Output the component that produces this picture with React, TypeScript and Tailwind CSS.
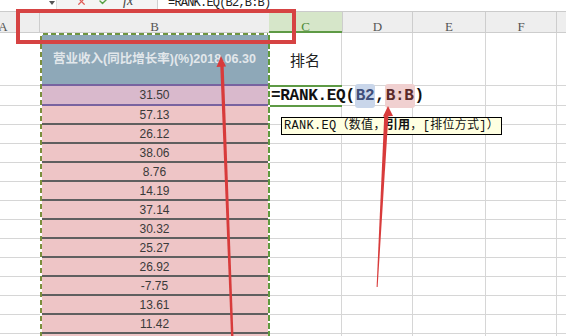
import { Check, X } from 'lucide-react';

const values = ['57.13', '26.12', '38.06', '8.76', '14.19', '37.14', '30.32', '25.27', '26.92', '-7.75', '13.61', '11.42', ''];

const grid = 'shrink-0 border-b border-r border-[#d6d6d6]';

function Rest({ children }: { children?: React.ReactNode }) {
  return (
    <>
      <div className={`w-[73px] ${grid} flex items-center justify-center`}>{children}</div>
      <div className={`w-[71px] ${grid}`} />
      <div className={`w-[73px] ${grid}`} />
      <div className={`w-[71px] ${grid}`} />
      <div className="w-[60px] shrink-0 border-b border-[#d6d6d6]" />
    </>
  );
}

export default function App() {
  return (
    <div className="relative w-[566px] h-[336px] overflow-hidden bg-white font-['Liberation_Sans','Noto_Sans_CJK_SC',sans-serif]">
      {/* formula bar, mostly scrolled off the top */}
      <div className="flex h-[12px] overflow-hidden border-b border-[#cbcbcb]">
        <div className="w-[57px] shrink-0 relative border-r border-[#dedede]">
          <svg className="absolute left-[49px] top-[1px]" width="6" height="4" viewBox="0 0 6 4">
            <polygon points="0,0 6,0 3,4" fill="#555" />
          </svg>
        </div>
        <div className="w-[100px] shrink-0 flex items-start bg-[#f4f4f4] pl-[19px]">
          <X size={11} strokeWidth={2.6} className="-mt-[4px] text-[#df5a55]" />
          <Check size={12} strokeWidth={2.8} className="-mt-[5px] ml-[11px] text-[#57a044]" />
          <span className="-mt-[6px] ml-[13px] font-['Liberation_Serif',serif] italic text-[14px] leading-[14px] text-[#444]">fx</span>
        </div>
        <div className="flex-1 border-l border-[#d0d0d0] pl-[10px]">
          <div className="-mt-[3px] font-['Liberation_Mono',monospace] text-[12px] leading-[12px] tracking-[-0.8px] text-[#222]">
            =RANK.EQ(B2,B:B)
          </div>
        </div>
      </div>

      <div className="-ml-[33px] flex flex-col">
        {/* column headers */}
        <div className="flex h-[21px] bg-[#eeeeee] font-['Liberation_Serif',serif] text-[13px] text-[#555]">
          <div className="w-[73px] shrink-0 border-b border-r border-[#cdcdcd] flex justify-center pt-[5px]">A</div>
          <div className="w-[229px] shrink-0 border-b border-[#cdcdcd] flex justify-center pt-[5px]">B</div>
          <div className="w-[73px] shrink-0 border-b-2 border-[#5e9a45] bg-[#d6e6c9] text-[#4f8b3a] flex justify-center pt-[5px]">C</div>
          <div className="w-[71px] shrink-0 border-b border-r border-l border-[#cdcdcd] flex justify-center pt-[5px]">D</div>
          <div className="w-[73px] shrink-0 border-b border-r border-[#cdcdcd] flex justify-center pt-[5px]">E</div>
          <div className="w-[71px] shrink-0 border-b border-r border-[#cdcdcd] flex justify-center pt-[5px]">F</div>
          <div className="w-[60px] shrink-0 border-b border-[#cdcdcd]" />
        </div>

        {/* row 1 */}
        <div className="flex h-[53px]">
          <div className="w-[73px] shrink-0 border-b border-[#d6d6d6]" />
          <div className="w-[229px] shrink-0 flex items-center justify-center bg-[#8ea8b8] border-b-2 border-[#7863a0] text-[12.5px] font-bold text-[#e2e7eb] pt-[2px]">
            营业收入(同比增长率)(%)2018.06.30
          </div>
          <Rest>
            <span className="font-['Noto_Sans_CJK_SC',sans-serif] text-[15px] text-[#222] mt-[2px]">排名</span>
          </Rest>
        </div>

        {/* row 2 */}
        <div className="flex h-[20px]">
          <div className="w-[73px] shrink-0 border-b border-[#d6d6d6]" />
          <div className="w-[229px] shrink-0 flex items-center justify-center bg-[#d9b9cc] border-b-2 border-[#7863a0] text-[12px] text-[#3a3a3a]">
            31.50
          </div>
          <Rest />
        </div>

        {values.map((v, i) => (
          <div key={i} className="flex h-[19px]">
            <div className="w-[73px] shrink-0 border-b border-[#d6d6d6]" />
            <div className="w-[229px] shrink-0 flex items-center justify-center bg-[#eec5c6] border-b-2 border-[#5f5f5f] text-[12px] text-[#3a3a3a]">
              {v}
            </div>
            <Rest />
          </div>
        ))}
      </div>

      {/* copy marquee around column B */}
      <div className="absolute left-[40px] top-[33px] w-[230px] h-[2px] bg-[image:repeating-linear-gradient(to_right,#ffffff_0_3px,#6f9540_3px_8px)]" />
      <div className="absolute left-[40px] top-[33px] bottom-0 w-[2px] bg-[image:repeating-linear-gradient(to_bottom,#ffffff_0_3px,#7a8f3c_3px_8px)]" />
      <div className="absolute left-[268px] top-[33px] bottom-0 w-[2px] bg-[image:repeating-linear-gradient(to_bottom,#ffffff_0_2px,#5f9a3e_2px_8px)]" />

      {/* active cell C2 with in-cell editor */}
      <div className="absolute left-[270px] top-[85px] w-[72px] h-[22px] border-y-2 border-[#5e9a45]" />
      <div className="absolute left-[271px] top-[87px] h-[18px] pr-[4px] bg-white flex items-center whitespace-nowrap font-['Liberation_Mono',monospace] font-bold text-[16px] tracking-[-0.3px] text-[#111]">
        =RANK.EQ(
        <span className="rounded-[3px] bg-[#c9d6ea] text-[#3f4f7a] px-[1px]">B2</span>,
        <span className="rounded-[3px] bg-[#f0d0d0] text-[#5a2a2a] px-[1px]">B:B</span>)
      </div>

      {/* function hint */}
      <div className="absolute left-[281px] top-[117px] w-[221px] h-[18px] border border-black bg-[#ffffe1] px-[2px] whitespace-nowrap font-['Liberation_Mono','Noto_Sans_CJK_SC',monospace] text-[12px] leading-[16px] tracking-[0.3px] text-[#111]">
        RANK.EQ（数值，<span className="font-bold">引用</span>，[排位方式]）
      </div>

      {/* annotation box */}
      <div className="absolute left-[16px] top-[9px] w-[280px] h-[35px] border-[4px] border-[#d64343]" />

      {/* annotation arrows */}
      <svg className="absolute inset-0 pointer-events-none" width="566" height="336" viewBox="0 0 566 336">
        <polygon points="220.2,64 223.6,64 233.6,340 231.2,340" fill="#d83b3b" />
        <polygon points="221,56 216.5,67 226,66.5" fill="#d83b3b" />
        <polygon points="384.3,114 388.5,114 377.6,287 376.6,287" fill="#d83b3b" />
        <polygon points="388,106 383,116.5 393,116" fill="#d83b3b" />
      </svg>
    </div>
  );
}
